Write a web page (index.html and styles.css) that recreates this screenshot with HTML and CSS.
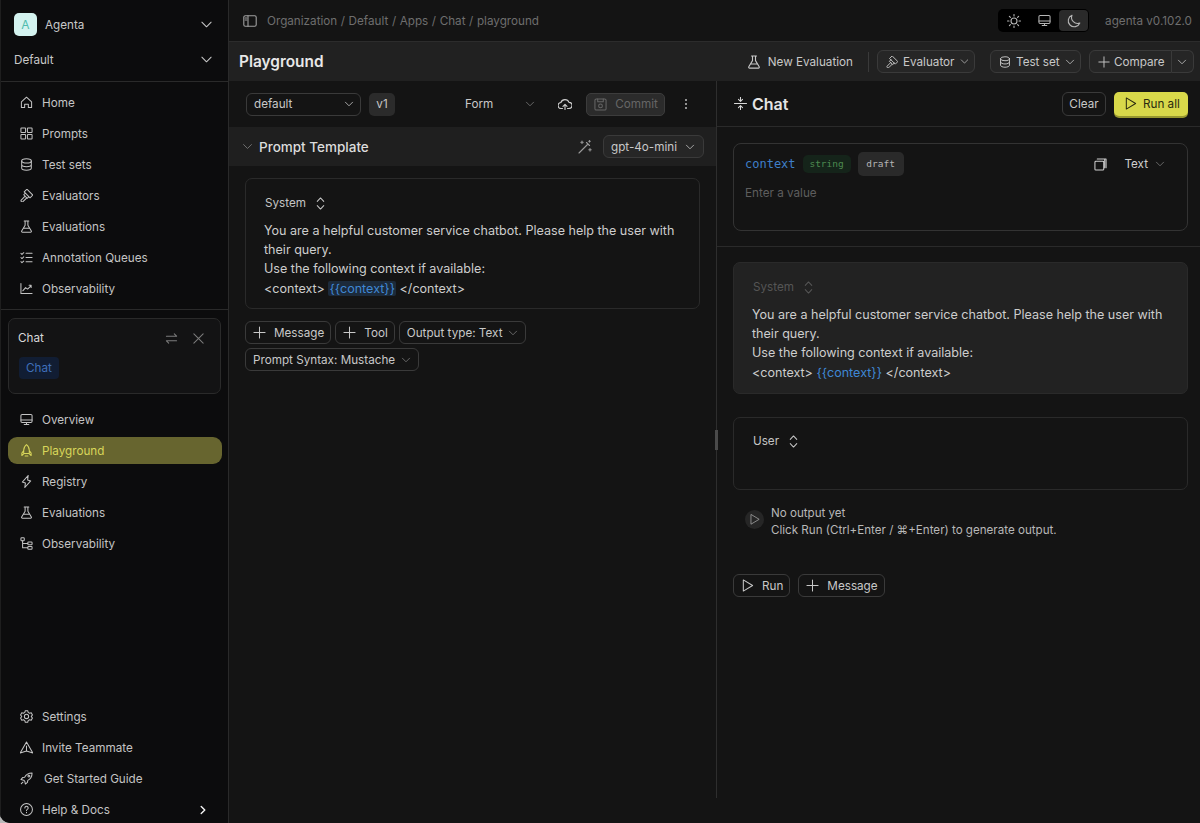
FILE: index.html
```html
<!doctype html>
<html>
<head>
	<meta charset="utf-8">
	<title>Playground - Agenta</title>
	<link rel="stylesheet" href="styles.css">
</head>
<body>
<svg class="defs" width="0" height="0">
	<symbol id="i-home" viewBox="1 1 14 14"><path d="M2.5 7.2 8 2.3l5.5 4.9v6.3H10V9.8H6v3.7H2.5z"/></symbol>
	<symbol id="i-grid" viewBox="1 1 14 14"><rect x="2" y="2" width="5" height="5" rx=".6"/><rect x="9" y="2" width="5" height="5" rx=".6"/><rect x="2" y="9" width="5" height="5" rx=".6"/><rect x="9" y="9" width="5" height="5" rx=".6"/></symbol>
	<symbol id="i-db" viewBox="1 1 14 14"><ellipse cx="8" cy="4.2" rx="5.2" ry="2.3"/><path d="M2.8 4.2v7.6c0 1.2 2.3 2.3 5.2 2.3s5.2-1.1 5.2-2.3V4.2M2.8 8c0 1.2 2.3 2.3 5.2 2.3s5.2-1.1 5.2-2.3"/></symbol>
	<symbol id="i-gavel" viewBox="1 1 14 14"><path d="M8.5 1.2l6.3 6.3-3 3-6.3-6.3zM6.8 5.4 5 7.2l3.800 3.800 1.800-1.800M6.500 8.700l-4.200 4.200a1.300 1.300 0 0 0 1.800 1.800l4.200-4.200"/></symbol>
	<symbol id="i-flask" viewBox="1 1 14 14"><path d="M5.5 2h5M6.5 2v4.6L2.8 12.8c-.4.7.1 1.3.8 1.3h8.8c.7 0 1.2-.6.8-1.3L9.5 6.6V2M4.6 10h6.8"/></symbol>
	<symbol id="i-checks" viewBox="1 1 14 14"><path d="M7.5 3.5H14M7.5 8H14M7.5 12.5H14M2 3.5l1.1 1.1L5 2.8M2 8l1.1 1.1L5 7.3M2 12.5l1.1 1.1L5 11.8"/></symbol>
	<symbol id="i-chart" viewBox="1 1 14 14"><path d="M2 2.5v11h12M4 10.5l3-3.5 2.2 1.6L13 5M10.8 4.6H13v2.2"/></symbol>
	<symbol id="i-swap" viewBox="1 1 14 14"><path d="M2.5 5.5h11M11 3l2.5 2.5M13.5 10.5h-11M5 13l-2.5-2.5"/></symbol>
	<symbol id="i-x" viewBox="1 1 14 14"><path d="M3 3l10 10M13 3 3 13"/></symbol>
	<symbol id="i-monitor" viewBox="1 1 14 14"><rect x="2" y="2.5" width="12" height="8.8" rx="1.3"/><path d="M2 8.6h12M8 11.3v2.2M5.5 13.5h5"/></symbol>
	<symbol id="i-launch" viewBox="1 1 14 14"><path d="M8 1.6c2.2 1.7 3 4 3 6.2v3.4H5V7.8c0-2.2.8-4.5 3-6.2zM5 8.2 3 10.8v2.7l2.4-2.3M11 8.2l2 2.6v2.7l-2.4-2.3M6.5 14h3"/></symbol>
	<symbol id="i-bolt" viewBox="1 1 14 14"><path d="M9.8 1.5 3.5 8.6l3.3 1.1M6.2 14.5l6.3-7.1-3.3-1.1M9.8 1.5 9.2 6.3M6.2 14.5l.6-4.8"/></symbol>
	<symbol id="i-tree" viewBox="1 1 14 14"><rect x="2" y="1.8" width="3.6" height="3.2" rx=".8"/><rect x="9.4" y="6.4" width="4.6" height="3" rx=".8"/><rect x="9.4" y="11.2" width="4.6" height="3" rx=".8"/><path d="M3.8 5v7.7h5.6M3.8 7.9h5.6"/></symbol>
	<symbol id="i-gear" viewBox="1 1 14 14"><circle cx="8" cy="8" r="2.3"/><path d="M6.7 1.8h2.6l.5 1.8 1.5.9 1.8-.5 1.3 2.3L13.1 8l1.3 1.7-1.3 2.3-1.8-.5-1.5.9-.5 1.8H6.7l-.5-1.8-1.5-.9-1.8.5-1.3-2.3L2.9 8 1.6 6.3l1.3-2.3 1.8.5 1.5-.9z"/></symbol>
	<symbol id="i-plane" viewBox="1 1 14 14"><path d="M8 2l6.8 11.8L8 11.8l-6.8 2zM8 11.8V6.5"/></symbol>
	<symbol id="i-rocket" viewBox="1 1 14 14"><path d="M14 2c-3.8 0-6.5 1.6-8 4.6L3.8 7 2 9.2l3 .6 1.2 1.2.6 3L9 12.2l.4-2.2C12.4 8.5 14 5.8 14 2zM2.4 13.6l1.8-1.8M10.5 4.4a1 1 0 1 0 .1 0"/></symbol>
	<symbol id="i-help" viewBox="1 1 14 14"><circle cx="8" cy="8" r="6.4"/><path d="M6.2 6.3a1.8 1.8 0 1 1 2.7 1.6c-.6.3-.9.7-.9 1.3M8 11v.6"/></symbol>
	<symbol id="i-down" viewBox="1 1 14 14"><path d="M3 5.5l5 5 5-5"/></symbol>
	<symbol id="i-right" viewBox="1 1 14 14"><path d="M5.5 3l5 5-5 5"/></symbol>
	<symbol id="i-panel" viewBox="1 1 14 14"><rect x="1.8" y="2.8" width="12.4" height="10.4" rx="1.5"/><path d="M6 2.8v10.4M3.2 5h1.5M3.2 7h1.5"/></symbol>
	<symbol id="i-sun" viewBox="1 1 14 14"><circle cx="8" cy="8" r="3"/><path d="M8 1.5V3M8 13v1.5M1.5 8H3M13 8h1.5M3.4 3.4l1 1M11.6 11.6l1 1M3.4 12.6l1-1M11.6 4.4l1-1"/></symbol>
	<symbol id="i-moon" viewBox="1 1 14 14"><path d="M13.8 10A6 6 0 0 1 6 2.2 6 6 0 1 0 13.8 10z"/></symbol>
	<symbol id="i-cloud" viewBox="1 1 14 14"><path d="M5.5 12.5H4.3a3 3 0 0 1-.4-6A4.3 4.3 0 0 1 12 6.4a3 3 0 0 1 0 6.1h-1.5M8 13.5v-5M6 10.3l2-2 2 2"/></symbol>
	<symbol id="i-save" viewBox="1 1 14 14"><rect x="2" y="2" width="12" height="12" rx="1.5"/><path d="M5 2v3h6V2"/><circle cx="8" cy="9.5" r="2"/></symbol>
	<symbol id="i-wand" viewBox="1 1 14 14"><path d="M2 14l9-9M9.5 3.5l3 3M5 2v2.4M3.8 3.2h2.4M13 9.5v2.4M11.8 10.7h2.4M12.5 1.5v1.6M11.7 2.3h1.6"/></symbol>
	<symbol id="i-plus" viewBox="1 1 14 14"><path d="M8 2v12M2 8h12"/></symbol>
	<symbol id="i-play" viewBox="1 1 14 14"><path d="M3.5 2v12l10-6z"/></symbol>
	<symbol id="i-copy" viewBox="1 1 14 14"><rect x="2" y="4.5" width="9.5" height="9.5" rx="1"/><path d="M4.5 2H14v9.5M12.5 2.5v9"/></symbol>
	<symbol id="i-updown" viewBox="1 1 14 14"><path d="M4.5 5.8 8 2l3.5 3.8M4.5 10.2 8 14l3.5-3.8"/></symbol>
	<symbol id="i-fold" viewBox="1 1 14 14"><path d="M1.5 8h13M8 1v4.5M5.8 3.5 8 5.7l2.2-2.2M8 15v-4.5M5.8 12.5 8 10.3l2.2 2.2"/></symbol>
</svg>

<div class="app">
	<aside class="sidebar">
		<div class="side-head">
			<div class="org-row">
				<span class="logo">A</span>
				<span class="org-name">Agenta</span>
				<svg class="ico ico-13"><use href="#i-down"/></svg>
			</div>
			<div class="org-row workspace">
				<span class="org-name">Default</span>
				<svg class="ico ico-13"><use href="#i-down"/></svg>
			</div>
		</div>
		<ul class="nav nav-top">
			<li class="nav-item"><svg class="ico"><use href="#i-home"/></svg>Home</li>
			<li class="nav-item"><svg class="ico"><use href="#i-grid"/></svg>Prompts</li>
			<li class="nav-item"><svg class="ico"><use href="#i-db"/></svg>Test sets</li>
			<li class="nav-item"><svg class="ico"><use href="#i-gavel"/></svg>Evaluators</li>
			<li class="nav-item"><svg class="ico"><use href="#i-flask"/></svg>Evaluations</li>
			<li class="nav-item"><svg class="ico"><use href="#i-checks"/></svg>Annotation Queues</li>
			<li class="nav-item"><svg class="ico"><use href="#i-chart"/></svg>Observability</li>
		</ul>
		<div class="app-card">
			<div class="app-card-head">
				<span>Chat</span>
				<svg class="ico ico-13 dim"><use href="#i-swap"/></svg>
				<svg class="ico ico-13 dim"><use href="#i-x"/></svg>
			</div>
			<span class="app-tag">Chat</span>
		</div>
		<ul class="nav">
			<li class="nav-item"><svg class="ico"><use href="#i-monitor"/></svg>Overview</li>
			<li class="nav-item active"><span class="nav-pill"><svg class="ico"><use href="#i-launch"/></svg>Playground</span></li>
			<li class="nav-item"><svg class="ico"><use href="#i-bolt"/></svg>Registry</li>
			<li class="nav-item"><svg class="ico"><use href="#i-flask"/></svg>Evaluations</li>
			<li class="nav-item"><svg class="ico"><use href="#i-tree"/></svg>Observability</li>
		</ul>
		<ul class="nav nav-bottom">
			<li class="nav-item"><svg class="ico"><use href="#i-gear"/></svg>Settings</li>
			<li class="nav-item"><svg class="ico"><use href="#i-plane"/></svg>Invite Teammate</li>
			<li class="nav-item guide"><svg class="ico"><use href="#i-rocket"/></svg>Get Started Guide</li>
			<li class="nav-item"><svg class="ico"><use href="#i-help"/></svg>Help &amp; Docs<svg class="ico ico-10 push more-caret"><use href="#i-right"/></svg></li>
		</ul>
	</aside>

	<main class="main">
		<header class="topbar">
			<svg class="ico ico-14 panel-ico"><use href="#i-panel"/></svg>
			<span class="crumbs">Organization<i>/</i>Default<i>/</i>Apps<i>/</i>Chat<i>/</i>playground</span>
			<div class="theme-switch">
				<span class="theme-btn"><svg class="ico ico-14"><use href="#i-sun"/></svg></span>
				<span class="theme-btn"><svg class="ico ico-13"><use href="#i-monitor"/></svg></span>
				<span class="theme-btn on"><svg class="ico ico-14"><use href="#i-moon"/></svg></span>
			</div>
			<span class="version">agenta v0.102.0</span>
		</header>

		<div class="pagebar">
			<h1>Playground</h1>
			<span class="new-eval"><svg class="ico ico-14"><use href="#i-flask"/></svg>New Evaluation</span>
			<span class="vsep"></span>
			<span class="btn btn-evaluator"><svg class="ico ico-12"><use href="#i-gavel"/></svg>Evaluator<svg class="ico ico-9"><use href="#i-down"/></svg></span>
			<span class="btn btn-testset"><svg class="ico ico-12"><use href="#i-db"/></svg>Test set<svg class="ico ico-10"><use href="#i-down"/></svg></span>
			<span class="btn-group">
				<span class="btn btn-compare"><svg class="ico ico-12"><use href="#i-plus"/></svg>Compare</span>
				<span class="btn btn-more"><svg class="ico ico-10"><use href="#i-down"/></svg></span>
			</span>
		</div>

		<div class="split">
			<section class="left">
				<div class="toolbar">
					<span class="btn select-default">default<svg class="ico ico-10 push"><use href="#i-down"/></svg></span>
					<span class="v-tag">v1</span>
					<span class="form-mode">Form<svg class="ico ico-10 dim"><use href="#i-down"/></svg></span>
					<svg class="ico ico-14 cloud"><use href="#i-cloud"/></svg>
					<span class="commit"><svg class="ico ico-13"><use href="#i-save"/></svg>Commit</span>
					<span class="dots"><b></b><b></b><b></b></span>
				</div>
				<div class="tpl-head">
					<svg class="ico ico-11 dim"><use href="#i-down"/></svg>
					<span class="tpl-title">Prompt Template</span>
					<svg class="ico ico-14 wand"><use href="#i-wand"/></svg>
					<span class="btn select-model">gpt-4o-mini<svg class="ico ico-10"><use href="#i-down"/></svg></span>
				</div>
				<div class="tpl-body">
					<div class="msg-card">
						<div class="role">System<svg class="ico ico-13"><use href="#i-updown"/></svg></div>
						<p class="msg-text">You are a helpful customer service chatbot. Please help the user with their query.<br>Use the following context if available:<br>&lt;context&gt; <span class="var var-box">{{context}}</span> &lt;/context&gt;</p>
					</div>
					<div class="tpl-actions">
						<span class="btn btn-add"><svg class="ico ico-13"><use href="#i-plus"/></svg>Message</span>
						<span class="btn btn-add"><svg class="ico ico-13"><use href="#i-plus"/></svg>Tool</span>
						<span class="btn btn-option">Output type: Text<svg class="ico ico-10 dim"><use href="#i-down"/></svg></span>
						<span class="btn btn-option">Prompt Syntax: Mustache<svg class="ico ico-10 dim"><use href="#i-down"/></svg></span>
					</div>
				</div>
			</section>

			<div class="gutter"><span class="gutter-thumb"></span></div>

			<section class="right">
				<div class="chat-head">
					<svg class="ico ico-13 fold"><use href="#i-fold"/></svg>
					<h2>Chat</h2>
					<span class="btn btn-clear">Clear</span>
					<span class="btn-run"><svg class="ico ico-13"><use href="#i-play"/></svg>Run all</span>
				</div>
				<div class="vars">
					<div class="var-card">
						<div class="var-row">
							<span class="var-name">context</span>
							<span class="chip chip-green">string</span>
							<span class="chip chip-gray">draft</span>
							<svg class="ico ico-13 copy"><use href="#i-copy"/></svg>
							<span class="text-mode">Text<svg class="ico ico-10 dim"><use href="#i-down"/></svg></span>
						</div>
						<div class="placeholder">Enter a value</div>
					</div>
				</div>
				<div class="messages">
					<div class="msg-card msg-system">
						<div class="role">System<svg class="ico ico-13"><use href="#i-updown"/></svg></div>
						<p class="msg-text">You are a helpful customer service chatbot. Please help the user with their query.<br>Use the following context if available:<br>&lt;context&gt; <span class="var">{{context}}</span> &lt;/context&gt;</p>
					</div>
					<div class="msg-card msg-user">
						<div class="role">User<svg class="ico ico-13"><use href="#i-updown"/></svg></div>
					</div>
					<div class="no-output">
						<span class="play-dot"><svg class="ico ico-11"><use href="#i-play"/></svg></span>
						<div>
							<div>No output yet</div>
							<div>Click Run (Ctrl+Enter / ⌘+Enter) to generate output.</div>
						</div>
					</div>
					<div class="run-actions">
						<span class="btn btn-add"><svg class="ico ico-13"><use href="#i-play"/></svg>Run</span>
						<span class="btn btn-add"><svg class="ico ico-13"><use href="#i-plus"/></svg>Message</span>
					</div>
				</div>
			</section>
		</div>
	</main>
</div>
</body>
</html>
```

FILE: styles.css
```css
* { margin: 0; padding: 0; box-sizing: border-box; }
html, body { height: 100%; overflow: hidden; background: #b9b9b9; }
body {
	font-family: Inter, "Liberation Sans", sans-serif;
	font-size: 11.7px;
	color: #d0d0d0;
}
ul { list-style: none; }
.defs { position: absolute; }

.ico {
	width: 13px;
	height: 13px;
	flex: none;
	overflow: visible;
	fill: none;
	stroke: currentColor;
	stroke-width: 1.1;
	stroke-linecap: round;
	stroke-linejoin: round;
}
.ico-9 { width: 9px; height: 9px; }
.ico-10 { width: 10px; height: 10px; }
.ico-11 { width: 11px; height: 11px; }
.ico-12 { width: 12px; height: 12px; }
.ico-13 { width: 13px; height: 13px; }
.ico-14 { width: 14px; height: 14px; }
.dim { color: #7c7c7c; }
.push { margin-left: auto; }

.app {
	display: flex;
	height: 823px;
	border-bottom-left-radius: 10px;
	overflow: hidden;
	background: #141414;
}

/* sidebar */
.sidebar {
	display: flex;
	flex-direction: column;
	flex: none;
	width: 229px;
	background: #0c0c0d;
	border-left: 1px solid #1e1e1e;
	border-right: 1px solid #2a2a2a;
}
.side-head { height: 82px; border-bottom: 1px solid #2a2a2a; padding: 13px 15px 0 13px; }
.org-row { display: flex; align-items: center; justify-content: space-between; height: 23px; color: #c8c8c8; }
.org-row .org-name { flex: 1; }
.logo {
	width: 23px;
	height: 23px;
	margin-right: 8px;
	border-radius: 5px;
	background: #d4f3ef;
	color: #4fbcae;
	font-size: 12px;
	line-height: 23px;
	text-align: center;
}
.workspace { margin-top: 12px; }

.nav { padding: 0 6px 0 7px; }
.nav-top { padding-top: 5px; padding-bottom: 5px; border-bottom: 1px solid #2a2a2a; }
.nav-item {
	display: flex;
	align-items: center;
	gap: 10px;
	height: 31px;
	padding-left: 12px;
	padding-right: 14px;
	color: #c4c4c4;
}
.nav-item.active { padding: 0; }
.nav-pill {
	display: flex;
	align-items: center;
	gap: 10px;
	width: 100%;
	height: 27px;
	padding-left: 12px;
	border-radius: 9px;
	background: #67652f;
	color: #d8d65a;
}
.nav-item > .ico:first-child, .nav-pill > .ico { margin-right: -1px; }
.guide { gap: 12px; }
.nav-bottom { margin-top: auto; margin-bottom: -2px; }
.more-caret { color: #f0f0f0; stroke-width: 2; }

.app-card {
	height: 76px;
	margin: 8px 7px 10px 7px;
	padding: 9px;
	border: 1px solid #2a2a2a;
	border-radius: 7px;
	background: #131314;
}
.app-card-head { display: flex; align-items: center; gap: 14px; height: 20px; color: #d8d8d8; }
.app-card-head span { flex: 1; }
.app-card-head .ico:last-child { margin-right: 6px; }
.app-tag {
	display: inline-block;
	margin: 9px 0 0 1px;
	padding: 0 7px;
	height: 22px;
	line-height: 22px;
	border-radius: 4px;
	background: #111d33;
	color: #3f6fb8;
}

/* main */
.main { flex: 1; min-width: 0; display: flex; flex-direction: column; }
.topbar {
	display: flex;
	align-items: center;
	flex: none;
	height: 42px;
	padding: 0 8px 0 14px;
	background: #141414;
	border-bottom: 1px solid #2c2c2c;
}
.panel-ico { color: #a0a0a0; }
.crumbs { margin-left: 10px; color: #6e6e6e; }
.crumbs i { font-style: normal; margin: 0 3.6px; }
.theme-switch {
	display: flex;
	margin-left: auto;
	padding: 1px;
	height: 23px;
	border-radius: 5px;
	background: #000;
}
.theme-btn { display: flex; align-items: center; justify-content: center; width: 30px; border-radius: 4px; color: #b5b5b5; }
.theme-btn.on { background: #2a2a2a; width: 29px; }
.version { margin-left: 16px; color: #6e6e6e; }

.pagebar {
	display: flex;
	align-items: center;
	flex: none;
	height: 39px;
	padding: 0 6px 0 10px;
	background: #212121;
}
h1 { font-size: 15.4px; font-weight: 600; color: #e8e8e8; }
.new-eval { display: flex; align-items: center; gap: 7px; margin-left: auto; color: #c8c8c8; }
.vsep { width: 1px; height: 20px; margin: 0 8px 0 15px; background: #3a3a3a; }

.btn {
	display: inline-flex;
	align-items: center;
	gap: 6px;
	height: 23px;
	padding: 0 8px;
	border: 1px solid #3a3a3a;
	border-radius: 6px;
	color: #c8c8c8;
	white-space: nowrap;
}
.btn-add { gap: 8px; padding: 0 6px 0 7px; }
.btn-option { padding: 0 7px; }
.pagebar .btn { background: #262626; }
.btn-evaluator { width: 98px; gap: 5px; padding: 0 7px 0 8px; }
.btn-testset { width: 91px; gap: 5px; margin-left: 15px; padding: 0 7px 0 8px; }
.btn-group { display: flex; margin-left: 8px; }
.btn-compare { width: 83px; gap: 4px; border-radius: 6px 0 0 6px; }
.btn-more { width: 22px; border-left: 0; border-radius: 0 6px 6px 0; padding: 0 5px; }

.split { flex: 1; min-height: 0; display: flex; }
.left { flex: none; width: 487px; display: flex; flex-direction: column; }
.gutter { position: relative; flex: none; width: 1px; margin-bottom: 25px; background: #2e2e2e; }
.gutter-thumb { position: absolute; left: -1px; top: 349px; width: 3px; height: 20px; background: #4a4a4a; }
.right { flex: 1; min-width: 0; display: flex; flex-direction: column; }

.toolbar { display: flex; align-items: center; height: 46px; padding: 0 22px 0 17px; }
.select-default { width: 115px; padding: 0 6px 0 7px; }
.v-tag {
	width: 26px;
	height: 23px;
	margin-left: 8px;
	line-height: 23px;
	text-align: center;
	border-radius: 5px;
	background: #2b2b2b;
	color: #c8c8c8;
}
.form-mode { display: flex; align-items: center; gap: 32px; margin-left: 70px; color: #c8c8c8; }
.cloud { margin-left: 23px; }
.commit {
	display: flex;
	align-items: center;
	gap: 8px;
	width: 79px;
	height: 23px;
	margin-left: 14px;
	padding: 0 7px;
	border: 1px solid #3c3c3c;
	border-radius: 5px;
	background: #2b2b2b;
	color: #666;
}
.dots { display: flex; flex-direction: column; gap: 2px; margin-left: 20px; }
.dots b { width: 2px; height: 2px; border-radius: 50%; background: #bbb; }

.tpl-head { display: flex; align-items: center; height: 39px; padding: 0 12px 0 13px; background: #1f1f1f; }
.tpl-title { margin-left: 6px; font-size: 13.5px; font-weight: 500; color: #dcdcdc; }
.wand { margin-left: auto; color: #9a9a9a; }
.select-model { margin-left: 11px; width: 101px; padding: 0 8px 0 7px; justify-content: space-between; background: #262626; }
.tpl-body { padding: 12px 16px; }

.msg-card { border: 1px solid #2a2a2a; border-radius: 7px; }
.tpl-body .msg-card { height: 131px; padding: 14px 18px 0 18px; }
.role { display: flex; align-items: center; gap: 8px; height: 20px; margin-left: 1px; color: #c4c4c4; }
.msg-text { margin-top: 8px; font-size: 12.55px; line-height: 19.2px; color: #cdcdcd; }
.var { color: #3f87d4; }
.var-box { padding: 0 1px; background: #1c2a3a; border-radius: 2px; }
.tpl-actions { display: flex; flex-wrap: wrap; gap: 4px; margin-top: 12px; }

.chat-head { display: flex; align-items: center; height: 46px; padding: 0 12px 0 17px; border-bottom: 1px solid #2a2a2a; }
.fold { color: #d8d8d8; }
h2 { margin-left: 5px; margin-right: auto; font-size: 16px; font-weight: 600; color: #e4e4e4; }
.btn-clear { width: 44px; height: 24px; justify-content: center; padding: 0; }
.btn-run {
	display: flex;
	align-items: center;
	gap: 6px;
	width: 74px;
	height: 24px;
	margin-left: 8px;
	padding: 0 0 0 10px;
	border-radius: 5px;
	background: #d8d84a;
	box-shadow: 0 2px 0 #97972f;
	color: #2a2a10;
}
.vars { height: 120px; padding: 16px 12px 0 16px; border-bottom: 1px solid #2a2a2a; }
.var-card { height: 88px; padding: 8px 22px 0 11px; border: 1px solid #333; border-radius: 8px; }
.var-row { display: flex; align-items: center; gap: 7px; height: 24px; }
.var-name { font-family: "DejaVu Sans Mono", "Liberation Mono", monospace; font-size: 12px; color: #3f7fc8; }
.chip { font-family: "DejaVu Sans Mono", "Liberation Mono", monospace; font-size: 9.5px; border-radius: 5px; text-align: center; }
.chip-green { width: 48px; height: 18px; line-height: 18px; background: #15241a; color: #4d8a50; }
.chip-gray { width: 46px; height: 24px; line-height: 24px; background: #2a2a2a; color: #b5b5b5; }
.copy { margin-left: auto; }
.text-mode { display: flex; align-items: center; gap: 7px; margin-left: 10px; color: #cfcfcf; }
.placeholder { margin-top: 10px; color: #5e5e5e; }

.messages { padding: 15px 12px 0 16px; }
.msg-system { height: 132px; padding: 14px 18px 0 18px; border-color: #2a2a2a; background: #222; }
.msg-system .role { color: #555; }
.msg-user { height: 73px; margin-top: 23px; padding: 13px 18px 0 18px; }
.no-output { display: flex; gap: 7px; margin: 15px 0 0 12px; line-height: 17px; font-size: 11.6px; color: #b8b8b8; }
.play-dot {
	display: flex;
	align-items: center;
	justify-content: center;
	width: 19px;
	height: 19px;
	margin-top: 5px;
	border-radius: 50%;
	background: #262626;
	color: #999;
}
.run-actions { display: flex; gap: 8px; margin-top: 35px; }
```
